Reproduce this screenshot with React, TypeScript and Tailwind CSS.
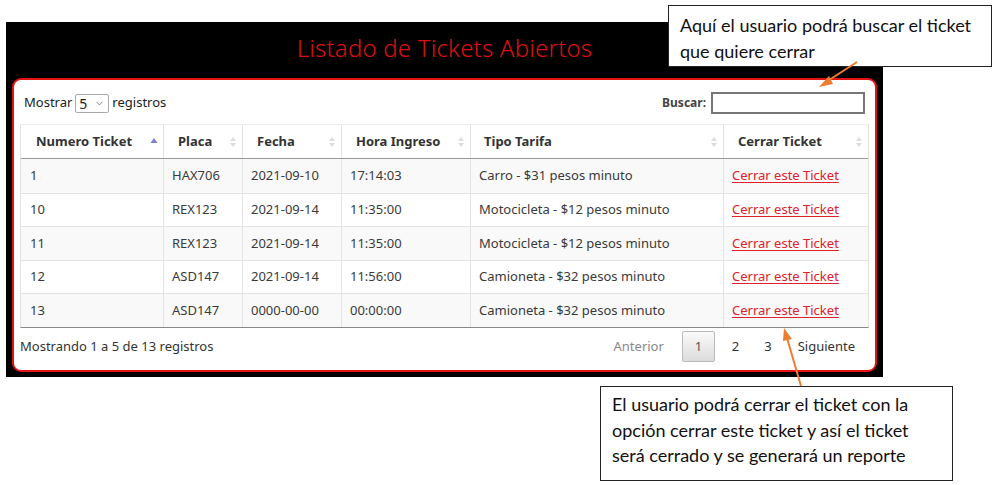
import { ChevronDown } from 'lucide-react';

type Row = { id: string; placa: string; fecha: string; hora: string; tarifa: string };

const ROWS: Row[] = [
  { id: '1', placa: 'HAX706', fecha: '2021-09-10', hora: '17:14:03', tarifa: 'Carro - $31 pesos minuto' },
  { id: '10', placa: 'REX123', fecha: '2021-09-14', hora: '11:35:00', tarifa: 'Motocicleta - $12 pesos minuto' },
  { id: '11', placa: 'REX123', fecha: '2021-09-14', hora: '11:35:00', tarifa: 'Motocicleta - $12 pesos minuto' },
  { id: '12', placa: 'ASD147', fecha: '2021-09-14', hora: '11:56:00', tarifa: 'Camioneta - $32 pesos minuto' },
  { id: '13', placa: 'ASD147', fecha: '0000-00-00', hora: '00:00:00', tarifa: 'Camioneta - $32 pesos minuto' },
];

const COLS = [
  { label: 'Numero Ticket', w: 'w-[142px]', pl: 'pl-[15px]', active: true },
  { label: 'Placa', w: 'w-[79px]', pl: 'pl-[14px]', active: false },
  { label: 'Fecha', w: 'w-[99px]', pl: 'pl-[14px]', active: false },
  { label: 'Hora Ingreso', w: 'w-[129px]', pl: 'pl-[14px]', active: false },
  { label: 'Tipo Tarifa', w: 'w-[253px]', pl: 'pl-[13px]', active: false },
  { label: 'Cerrar Ticket', w: 'flex-1', pl: 'pl-[14px]', active: false },
];

function SortIcon({ active }: { active: boolean }) {
  if (active) {
    return (
      <svg width="8" height="10" viewBox="0 0 8 10" className="shrink-0">
        <path d="M4 1 L7.5 6 L0.5 6 Z" fill="#7b7fd6" />
      </svg>
    );
  }
  return (
    <svg width="8" height="12" viewBox="0 0 8 12" className="shrink-0">
      <path d="M4 1 L7 5 L1 5 Z" fill="#dcdcdc" />
      <path d="M4 11 L7 7 L1 7 Z" fill="#dcdcdc" />
    </svg>
  );
}

function Callout({ lines, className }: { lines: string[]; className: string }) {
  return (
    <div
      className={`absolute bg-white border border-[#222] text-[#111] text-[18px] leading-[25.5px] font-['Lato',sans-serif] px-[11px] ${className}`}
    >
      {lines.map((l) => (
        <div key={l}>{l}</div>
      ))}
    </div>
  );
}

export default function App() {
  const sans = "font-['Lato','Liberation Sans',sans-serif]";
  return (
    <div className={`relative w-[997px] h-[485px] bg-white overflow-hidden ${sans}`}>
      <div className="ml-[6px] mt-[22px] w-[877px] h-[355px] bg-black flex flex-col px-[6px] pb-[5px]">
        <div className="h-[56px] flex items-center justify-center text-[#dd1010] text-[24px] font-['Noto_Sans',sans-serif] font-light tracking-[0.2px] pb-[4px]">
          Listado de Tickets Abiertos
        </div>
        <div className="flex-1 bg-white rounded-[9px] border-2 border-[#e51212] px-[6px] flex flex-col text-[13px] text-[#333]">
          <div className="h-[44px] flex items-center justify-between pl-[4px] pr-[4px] pt-[2px]">
            <div className="flex items-center gap-[3px] text-[#222]">
              <span>Mostrar</span>
              <span className="h-[19px] w-[34px] border border-[#aaa] rounded-[2px] flex items-center justify-between px-[3px] text-[14px]">
                5 <ChevronDown size={11} strokeWidth={1.5} className="text-[#555]" />
              </span>
              <span>registros</span>
            </div>
            <div className="flex items-center gap-[5px]">
              <span className="font-bold text-[12px] text-[#444]">Buscar:</span>
              <span className="w-[154px] h-[22px] border-2 border-[#777] bg-white" />
            </div>
          </div>
          <div className="border-l border-r border-[#e2e2e2] border-b border-b-[#888]">
            <div className="flex h-[35px] border-b border-b-[#999] border-t border-t-[#eee]">
              {COLS.map((c, i) => (
                <div
                  key={c.label}
                  className={`${c.w} ${c.pl} pr-[5px] flex items-center justify-between font-bold text-[#333] ${
                    i > 0 ? 'border-l border-[#e2e2e2]' : ''
                  }`}
                >
                  <span>{c.label}</span>
                  <SortIcon active={c.active} />
                </div>
              ))}
            </div>
            {ROWS.map((r, ri) => (
              <div
                key={r.id}
                className={`flex h-[33.5px] text-[#3a3a3a] ${ri % 2 === 0 ? 'bg-[#f9f9f9]' : 'bg-white'} ${
                  ri > 0 ? 'border-t border-[#e3e3e3]' : ''
                }`}
              >
                <div className="w-[142px] pl-[9px] flex items-center">{r.id}</div>
                <div className="w-[79px] pl-[8px] flex items-center border-l border-[#e3e3e3]">{r.placa}</div>
                <div className="w-[99px] pl-[8px] flex items-center border-l border-[#e3e3e3]">{r.fecha}</div>
                <div className="w-[129px] pl-[8px] flex items-center border-l border-[#e3e3e3]">{r.hora}</div>
                <div className="w-[253px] pl-[8px] flex items-center border-l border-[#e3e3e3]">{r.tarifa}</div>
                <div className="flex-1 pl-[8px] flex items-center border-l border-[#e3e3e3]">
                  <span className="text-[#e0202a] underline underline-offset-2">Cerrar este Ticket</span>
                </div>
              </div>
            ))}
          </div>
          <div className="flex-1 flex items-center justify-between pr-[14px] pb-[4px]">
            <span className="text-[#333]">Mostrando 1 a 5 de 13 registros</span>
            <div className="flex items-center text-[13px]">
              <span className="text-[#888] mr-[18px]">Anterior</span>
              <span className="w-[33px] h-[31px] flex items-center justify-center border border-[#bbb] rounded-[2px] bg-gradient-to-b from-[#fafafa] to-[#dcdcdc] text-[#555]">
                1
              </span>
              <span className="ml-[17px] text-[#333]">2</span>
              <span className="ml-[25px] text-[#333]">3</span>
              <span className="ml-[26px] text-[#333]">Siguiente</span>
            </div>
          </div>
        </div>
      </div>

      <Callout
        className="left-[668px] top-[5px] w-[324px] h-[62px] pt-[7px]"
        lines={['Aquí el usuario podrá buscar el ticket', 'que quiere cerrar']}
      />
      <Callout
        className="left-[600px] top-[386px] w-[353px] h-[95px] pt-[5px]"
        lines={[
          'El usuario podrá cerrar el ticket con la',
          'opción cerrar este ticket y así el ticket',
          'será cerrado y se generará un reporte',
        ]}
      />

      <svg className="absolute left-0 top-0 pointer-events-none" width="997" height="485">
        <line x1="857" y1="62" x2="826" y2="82" stroke="#ed7d31" strokeWidth="2" />
        <path d="M819 87 L829 76 L833 84 Z" fill="#ed7d31" />
        <line x1="801" y1="386" x2="787" y2="338" stroke="#ed7d31" strokeWidth="2" />
        <path d="M784 328 L792 339 L783 341 Z" fill="#ed7d31" />
      </svg>
    </div>
  );
}
